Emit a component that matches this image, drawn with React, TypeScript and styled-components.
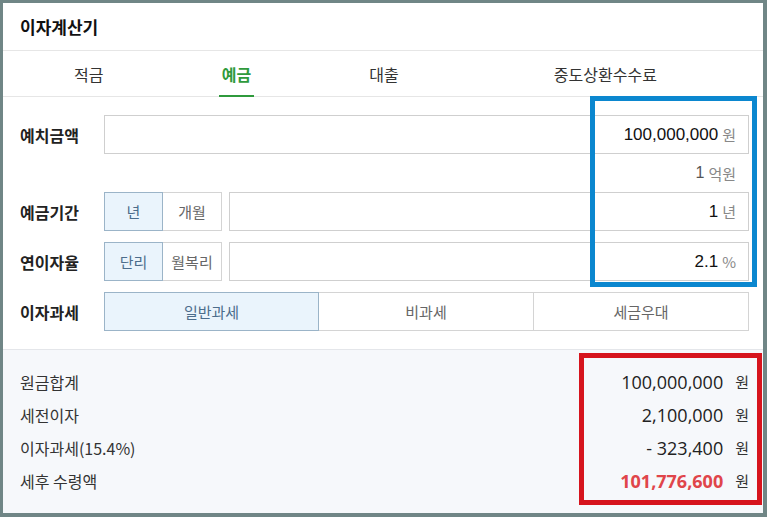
import styled, {createGlobalStyle} from "styled-components";

const GlobalStyle = createGlobalStyle`
  html, body {
    margin: 0;
    padding: 0;
    background: #ffffff;
  }
  body {
    font-family: "Noto Sans CJK KR", "Noto Sans", sans-serif;
    color: #222;
  }
`

const tabs = [
    {label: '적금', wide: false},
    {label: '예금', wide: false, active: true},
    {label: '대출', wide: false},
    {label: '중도상환수수료', wide: true},
]

const results = [
    {label: '원금합계', value: '100,000,000'},
    {label: '세전이자', value: '2,100,000'},
    {label: '이자과세(15.4%)', value: '- 323,400'},
    {label: '세후 수령액', value: '101,776,600', highlight: true},
]

function App() {
    return (
        <>
            <GlobalStyle/>
            <Frame>
                <Header>이자계산기</Header>
                <TabBar>
                    {tabs.map((t) =>
                        <Tab key={t.label} $wide={t.wide} $active={!!t.active}>
                            <TabLabel $active={!!t.active}>{t.label}</TabLabel>
                        </Tab>
                    )}
                </TabBar>
                <Form>
                    <Row>
                        <Label>예치금액</Label>
                        <InputBox>
                            <Value>100,000,000</Value>
                            <Unit>원</Unit>
                        </InputBox>
                    </Row>
                    <Hint>1 <Unit>억원</Unit></Hint>
                    <Row>
                        <Label>예금기간</Label>
                        <Segments>
                            <Segment $active>년</Segment>
                            <Segment>개월</Segment>
                        </Segments>
                        <InputBox>
                            <Value>1</Value>
                            <Unit>년</Unit>
                        </InputBox>
                    </Row>
                    <Row $gap>
                        <Label>연이자율</Label>
                        <Segments>
                            <Segment $active>단리</Segment>
                            <Segment>월복리</Segment>
                        </Segments>
                        <InputBox>
                            <Value>2.1</Value>
                            <Unit>%</Unit>
                        </InputBox>
                    </Row>
                    <Row $gap>
                        <Label>이자과세</Label>
                        <TaxOptions>
                            <TaxOption $active>일반과세</TaxOption>
                            <TaxOption>비과세</TaxOption>
                            <TaxOption>세금우대</TaxOption>
                        </TaxOptions>
                    </Row>
                </Form>
                <Results>
                    {results.map((r) =>
                        <ResultRow key={r.label}>
                            <ResultLabel>{r.label}</ResultLabel>
                            <ResultValue $highlight={!!r.highlight}>{r.value}</ResultValue>
                            <ResultUnit>원</ResultUnit>
                        </ResultRow>
                    )}
                </Results>
                <Marker $color="#0b87cf" style={{left: 587, top: 93, width: 157, height: 181}}/>
                <Marker $color="#d6141d" style={{left: 576, top: 350, width: 173, height: 142}}/>
            </Frame>
        </>
    )
}

const Frame = styled.div`
  position: relative;
  box-sizing: border-box;
  width: 767px;
  height: 517px;
  border: 3px solid #708686;
  border-right-width: 4px;
  border-bottom-width: 4px;
  background: #fff;
  display: flex;
  flex-direction: column;
  overflow: hidden;
`

const Header = styled.div`
  height: 48px;
  box-sizing: border-box;
  padding-left: 17px;
  display: flex;
  align-items: center;
  font-size: 17px;
  font-weight: 700;
  color: #111;
  border-bottom: 1px solid #e6e6e6;
`

const TabBar = styled.div`
  display: flex;
  height: 46px;
  box-sizing: border-box;
  padding: 0 10px 0 12px;
  border-bottom: 1px solid #e6e6e6;
`

const Tab = styled.div<{$wide: boolean, $active: boolean}>`
  flex: ${(p) => p.$wide ? 2 : 1};
  display: flex;
  justify-content: center;
  align-items: stretch;
`

const TabLabel = styled.div<{$active: boolean}>`
  display: flex;
  align-items: center;
  padding: 1px 3px 0;
  font-size: 16px;
  color: ${(p) => p.$active ? '#2f9a3c' : '#333'};
  font-weight: ${(p) => p.$active ? 700 : 400};
  border-bottom: 2px solid ${(p) => p.$active ? '#2f9a3c' : 'transparent'};
  margin-bottom: -1px;
`

const Form = styled.div`
  padding: 18px 14px 18px 17px;
  border-bottom: 1px solid #e4e6ea;
`

const Row = styled.div<{$gap?: boolean}>`
  display: flex;
  align-items: center;
  height: 39px;
  margin-top: ${(p) => p.$gap ? '11px' : '0'};
`

const Label = styled.div`
  width: 84px;
  flex-shrink: 0;
  font-size: 16px;
  font-weight: 700;
  color: #222;
`

const InputBox = styled.div`
  flex: 1;
  height: 39px;
  box-sizing: border-box;
  border: 1px solid #cfcfcf;
  display: flex;
  align-items: center;
  justify-content: flex-end;
  padding-right: 12px;
  gap: 4px;
`

const Value = styled.span`
  font-family: "Liberation Sans", Arial, sans-serif;
  font-size: 17px;
  color: #111;
`

const Unit = styled.span`
  font-size: 15px;
  color: #888;
`

const Hint = styled.div`
  height: 38px;
  display: flex;
  align-items: center;
  justify-content: flex-end;
  padding-right: 13px;
  font-family: "Liberation Sans", Arial, sans-serif;
  font-size: 16px;
  color: #555;
  gap: 4px;
  ${Unit} {
    font-family: "Noto Sans CJK KR", sans-serif;
    font-size: 15px;
  }
`

const Segments = styled.div`
  display: flex;
  margin-right: 7px;
`

const Segment = styled.div<{$active?: boolean}>`
  width: 59px;
  height: 39px;
  box-sizing: border-box;
  display: flex;
  align-items: center;
  justify-content: center;
  font-size: 15px;
  border: 1px solid ${(p) => p.$active ? '#9bb4c8' : '#d4d4d4'};
  background: ${(p) => p.$active ? '#eaf4fc' : '#fff'};
  color: ${(p) => p.$active ? '#4c6d8c' : '#666'};
  & + & {
    border-left: none;
  }
`

const TaxOptions = styled.div`
  flex: 1;
  display: grid;
  grid-template-columns: repeat(3, 1fr);
`

const TaxOption = styled.div<{$active?: boolean}>`
  height: 39px;
  box-sizing: border-box;
  display: flex;
  align-items: center;
  justify-content: center;
  font-size: 15px;
  border: 1px solid ${(p) => p.$active ? '#9bb4c8' : '#d4d4d4'};
  background: ${(p) => p.$active ? '#eaf4fc' : '#fff'};
  color: ${(p) => p.$active ? '#4c6d8c' : '#666'};
  & + & {
    border-left: none;
  }
`

const Results = styled.div`
  flex: 1;
  background: #f6f8fb;
  padding: 15px 14px 0 17px;
`

const ResultRow = styled.div`
  display: flex;
  align-items: center;
  height: 33px;
`

const ResultLabel = styled.div`
  flex: 1;
  font-size: 16px;
  color: #333;
`

const ResultValue = styled.div<{$highlight: boolean}>`
  font-family: "Open Sans", "Noto Sans", sans-serif;
  font-size: 18px;
  font-weight: ${(p) => p.$highlight ? 700 : 400};
  color: ${(p) => p.$highlight ? '#e0454a' : '#222'};
`

const ResultUnit = styled.div`
  margin-left: 12px;
  font-size: 15px;
  color: #333;
`

const Marker = styled.div<{$color: string}>`
  position: absolute;
  border: 5px solid ${(p) => p.$color};
  pointer-events: none;
`

export default App
